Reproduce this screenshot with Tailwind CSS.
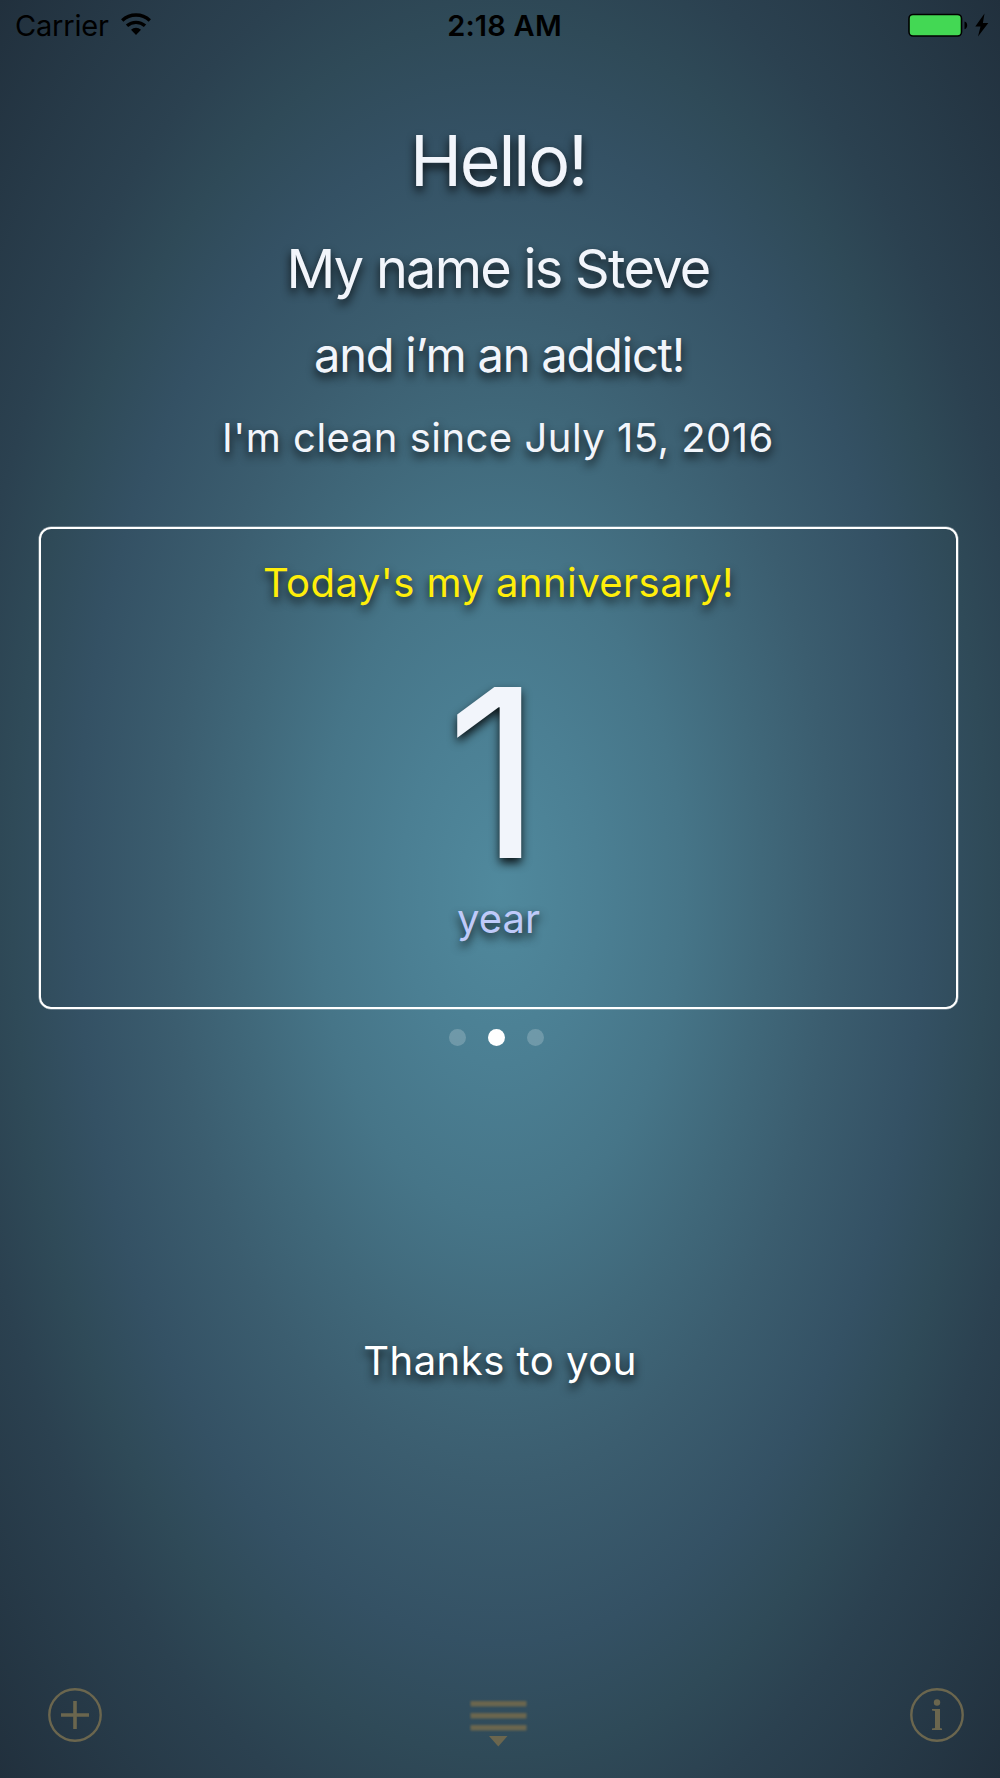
<!doctype html>
<html lang="en">
  <head>
    <meta charset="UTF-8" />
    <meta name="viewport" content="width=device-width, initial-scale=1.0" />
    <title>Clean Time</title>
    <!-- Include Tailwind CSS -->
    <script src="https://cdn.jsdelivr.net/npm/@tailwindcss/browser@4"></script>
  </head>
  <body
    class="flex h-[1778px] w-[1000px] flex-col overflow-hidden font-['Inter',sans-serif] text-[#f2f5fb] bg-[radial-gradient(ellipse_farthest-corner_at_50%_50%,#50899d_0%,#4b7f93_14%,#467588_26%,#40687a_37%,#3b5d6f_47%,#345164_60%,#2f4a58_69%,#2b4150_77%,#21303d_100%)]"
  >
    <!-- Status bar -->
    <header class="grid h-[50px] grid-cols-3 items-center px-[15px] pt-px text-black">
      <div class="flex items-center gap-3">
        <span class="text-[29px] leading-[48px] tracking-[-0.2px]">Carrier</span>
        <svg class="-mt-[3px] h-[22px] w-[30px]" viewBox="0 0 30 22" fill="none">
          <path d="M1.2 7.4a20.5 20.5 0 0 1 27.6 0" stroke="#000" stroke-width="3.4" />
          <path d="M6 12.8a13.4 13.4 0 0 1 18 0" stroke="#000" stroke-width="3.4" />
          <path d="M15 22l-5-5.2a7.4 7.4 0 0 1 10 0z" fill="#000" />
        </svg>
      </div>
      <span class="pt-px pl-[9px] text-center text-[29px] leading-[48px] font-semibold tracking-[0.2px]">2:18 AM</span>
      <svg class="-mr-[5px] h-[26px] w-[82px] justify-self-end" viewBox="0 0 82 26">
        <rect x="1" y="1.5" width="52.5" height="21.5" rx="4" fill="#43d854" stroke="#000" stroke-width="1.6" />
        <path d="M56.5 8.6c3.6.6 3.6 7 0 7.6z" fill="#000" />
        <path d="M76.5.5L67.3 13.5h5.2L70 23.5 80.300 10h-5.400z" fill="#000" />
      </svg>
    </header>

    <!-- Greeting -->
    <section
      class="flex flex-col items-center pt-[71px] pr-1 text-center whitespace-nowrap [text-shadow:0_5px_10px_rgb(0_0_0/0.85)]"
    >
      <h1 class="text-[70px] leading-[80px] tracking-[-2.1px]">Hello!</h1>
      <p class="mt-9 text-[54px] leading-[64px] tracking-[-1.72px]">My name is Steve</p>
      <p class="mt-[26px] pl-0.5 text-[47px] leading-[56px] tracking-[-1.2px]">and i’m an addict!</p>
      <p class="mt-[31px] text-[40px] leading-[48px] tracking-[0.49px]">I'm clean since July 15, 2016</p>
    </section>

    <!-- Counter card -->
    <section
      class="mt-[65px] ml-[39px] flex h-[482px] w-[919px] flex-col items-center rounded-xl border-2 border-white pt-[30px] whitespace-nowrap shadow-[0_0_0_0.5px_rgb(255_255_255/0.5)] [text-shadow:0_5px_10px_rgb(0_0_0/0.85)]"
    >
      <p class="text-[40px] leading-[48px] tracking-[0.45px] text-[#ffee0a]">Today's my anniversary!</p>
      <p class="mt-[46px] mr-[9px] text-[235px] leading-[240px]">1</p>
      <p class="mt-0.5 text-[40px] leading-[48px] text-[#bfcaf9]">year</p>
    </section>

    <!-- Page dots -->
    <div class="mt-5 mr-[7px] flex justify-center gap-[22px]">
      <span class="size-[17px] rounded-full bg-white/20"></span>
      <span class="size-[17px] rounded-full bg-white"></span>
      <span class="size-[17px] rounded-full bg-white/20"></span>
    </div>

    <p
      class="mt-[291px] text-center text-[40px] leading-[48px] tracking-[0.5px] text-white [text-shadow:0_5px_10px_rgb(0_0_0/0.85)]"
    >
      Thanks to you
    </p>

    <!-- Toolbar -->
    <footer class="mt-auto mb-[28px] flex items-center justify-between pr-[34px] pl-[46px] text-[#6b664e]">
      <svg class="size-[58px]" viewBox="0 0 58 58" fill="none" stroke="currentColor">
        <circle cx="29" cy="29" r="25.7" stroke-width="2.4" />
        <path d="M15 29h28M29 15v28" stroke-width="3.6" />
      </svg>
      <svg class="mt-[18px] mr-[14px] h-[52px] w-[60px]" viewBox="0 0 60 52" fill="currentColor">
        <g class="blur-[1px]">
          <rect x="1.5" y="3" width="56" height="5.5" />
          <rect x="1.5" y="15" width="56" height="5.5" />
          <rect x="1.5" y="27" width="56" height="5.5" />
        </g>
        <path d="M20 38h18.5l-9.2 10.5z" class="blur-[0.5px]" />
      </svg>
      <svg class="size-[58px]" viewBox="0 0 58 58" fill="currentColor">
        <circle cx="29" cy="29" r="25.7" fill="none" stroke="currentColor" stroke-width="2.4" />
        <circle cx="29" cy="16.5" r="3.2" />
        <path d="M24 23h8v19l2 .6V44H24v-1.4l3-.6V25l-3-.6z" />
      </svg>
    </footer>
  </body>
</html>
